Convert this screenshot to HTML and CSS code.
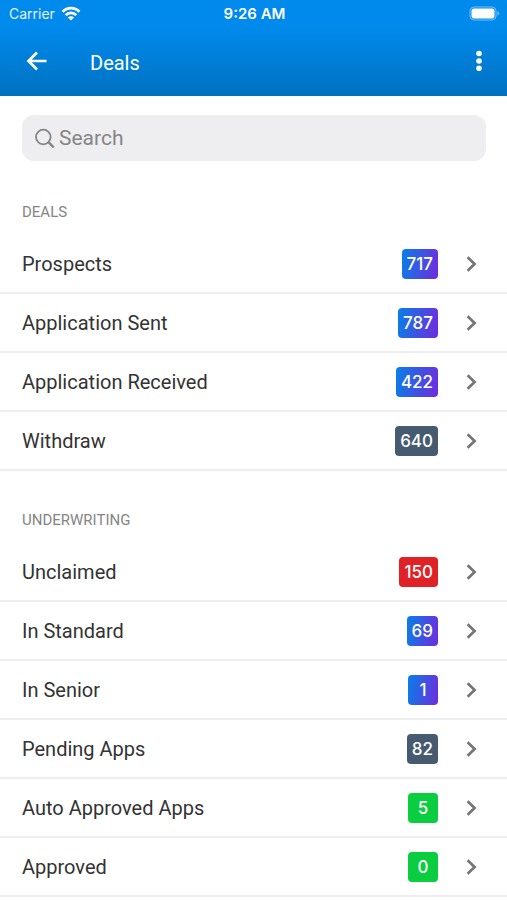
FILE: index.html
```html
<!DOCTYPE html>
<html lang="en">
<head>
<meta charset="utf-8">
<meta name="viewport" content="width=device-width, initial-scale=1">
<title>Deals</title>
<link rel="stylesheet" href="styles.css">
</head>
<body>
<svg class="sprite" aria-hidden="true">
  <symbol id="chevron" viewBox="0 0 12 18"><path d="M1.6 2.2 8.6 9 1.6 15.8" fill="none" stroke="currentColor" stroke-width="2.7"/></symbol>
</svg>
<header class="header">
  <div class="status">
    <div class="carrier">Carrier
      <svg width="20" height="16" viewBox="0 0 20 16" aria-hidden="true">
        <g fill="none" stroke="currentColor" stroke-width="2.8">
          <path d="M1.6 5.7C6.3.9 13.7.9 18.4 5.7"/>
          <path d="M4.7 9.1C7.7 6 12.3 6 15.3 9.1"/>
        </g>
        <path d="M6.9 11.4C8.7 9.8 11.3 9.8 13.1 11.4L10 14.6Z" fill="currentColor"/>
      </svg>
    </div>
    <div class="time">9:26 AM</div>
    <svg class="battery" width="31" height="16" viewBox="0 0 31 16" aria-hidden="true">
      <rect x="1" y="1" width="26" height="13" rx="4" fill="none" stroke="#fff" stroke-opacity=".45"/>
      <rect x="2.5" y="2.5" width="23" height="10" rx="2.5" fill="#fff"/>
      <path d="M28.5 5.3C30.5 6 30.5 9 28.5 9.7Z" fill="#fff" fill-opacity=".5"/>
    </svg>
  </div>
  <div class="toolbar">
    <button class="icon-button" type="button" aria-label="Back">
      <svg width="22" height="20" viewBox="0 0 22 20"><path d="M20.5 10H2.5M11 1.5 2.5 10 11 18.5" fill="none" stroke="currentColor" stroke-width="2.7"/></svg>
    </button>
    <h1 class="title">Deals</h1>
    <button class="icon-button" type="button" aria-label="More options">
      <svg width="6" height="22" viewBox="0 0 6 22" fill="currentColor"><circle cx="3" cy="3.5" r="2.8"/><circle cx="3" cy="11" r="2.8"/><circle cx="3" cy="18.3" r="2.8"/></svg>
    </button>
  </div>
</header>
<main>
  <label class="search">
    <svg width="20" height="20" viewBox="0 0 20 20" aria-hidden="true"><g fill="none" stroke="currentColor"><circle cx="8.3" cy="9" r="7.3" stroke-width="1.8"/><path d="m13.5 14.2 5.3 5.3" stroke-width="2.4"/></g></svg>
    <input type="search" placeholder="Search" aria-label="Search">
  </label>
  <section class="group">
    <h2 class="heading">DEALS</h2>
    <ul class="list">
      <li><a class="row" href="#prospects"><span class="label">Prospects</span><span class="badge">717</span><svg class="chevron"><use href="#chevron"/></svg></a></li>
      <li><a class="row" href="#sent"><span class="label">Application Sent</span><span class="badge">787</span><svg class="chevron"><use href="#chevron"/></svg></a></li>
      <li><a class="row" href="#received"><span class="label">Application Received</span><span class="badge">422</span><svg class="chevron"><use href="#chevron"/></svg></a></li>
      <li><a class="row" href="#withdraw"><span class="label">Withdraw</span><span class="badge slate">640</span><svg class="chevron"><use href="#chevron"/></svg></a></li>
    </ul>
  </section>
  <section class="group">
    <h2 class="heading">UNDERWRITING</h2>
    <ul class="list">
      <li><a class="row" href="#unclaimed"><span class="label">Unclaimed</span><span class="badge red">150</span><svg class="chevron"><use href="#chevron"/></svg></a></li>
      <li><a class="row" href="#standard"><span class="label">In Standard</span><span class="badge">69</span><svg class="chevron"><use href="#chevron"/></svg></a></li>
      <li><a class="row" href="#senior"><span class="label">In Senior</span><span class="badge">1</span><svg class="chevron"><use href="#chevron"/></svg></a></li>
      <li><a class="row" href="#pending"><span class="label">Pending Apps</span><span class="badge slate">82</span><svg class="chevron"><use href="#chevron"/></svg></a></li>
      <li><a class="row" href="#auto"><span class="label">Auto Approved Apps</span><span class="badge green">5</span><svg class="chevron"><use href="#chevron"/></svg></a></li>
      <li><a class="row" href="#approved"><span class="label">Approved</span><span class="badge green">0</span><svg class="chevron"><use href="#chevron"/></svg></a></li>
    </ul>
  </section>
</main>
</body>
</html>
```
FILE: styles.css
```css
* { box-sizing: border-box; }
body {
  margin: 0;
  background: #fff;
  color: #333;
  font-family: Roboto, "Liberation Sans", sans-serif;
}
.sprite { display: none; }
svg { display: block; flex: none; }
.header {
  color: #fff;
  background: linear-gradient(#008aeb 0, #008aeb 28px, #0071c1 100%);
}
.status {
  display: grid;
  grid-template-columns: 1fr auto 1fr;
  align-items: center;
  height: 28px;
  padding: 0 7px 0 9px;
  font: 400 14px/20px Inter, sans-serif;
}
.carrier { display: flex; align-items: center; gap: 6px; color: #e3f3ff; }
.carrier svg { color: #fff; }
.time { font-size: 15px; font-weight: 600; }
.battery { justify-self: end; }
.toolbar {
  display: flex;
  align-items: center;
  height: 68px;
  padding: 2px 13px 0 22px;
}
.icon-button {
  display: flex;
  align-items: center;
  justify-content: center;
  width: 30px;
  height: 40px;
  margin-bottom: 4px;
  padding: 0;
  border: 0;
  background: none;
  color: inherit;
}
.title {
  flex: 1;
  margin: 0 0 0 38px;
  font-size: 20px;
  line-height: 24px;
  font-weight: 400;
}
.search {
  display: flex;
  align-items: center;
  gap: 4px;
  height: 46px;
  margin: 19px 21px 0 22px;
  padding: 0 13px;
  border-radius: 12px;
  background: #eeeef0;
  color: #858587;
}
.search input {
  flex: 1;
  min-width: 0;
  padding: 0;
  border: 0;
  outline: 0;
  background: none;
  color: inherit;
  font: 400 21px/28px Roboto, sans-serif;
}
.search input::placeholder { color: inherit; opacity: 1; }
.heading {
  margin: 0;
  padding: 41px 22px 13px;
  color: #858585;
  font-size: 15px;
  line-height: 20px;
  font-weight: 400;
}
.group + .group .heading { padding-top: 39px; }
.list { margin: 0; padding: 0; list-style: none; }
.row {
  display: flex;
  align-items: center;
  height: 59px;
  padding: 1px 29px 0 22px;
  border-bottom: 2px solid #eee;
  color: inherit;
  text-decoration: none;
}
.label { flex: 1; font-size: 20px; line-height: 24px; }
.badge {
  min-width: 30px;
  padding: 0 5px;
  border-radius: 4px;
  background: linear-gradient(100deg, #087fe8, #702bdd);
  color: #fff;
  font: 500 17px/30px Inter, sans-serif;
  text-align: center;
}
.slate { background: #475b70; }
.red { background: #e02226; }
.green { background: #0bcd40; }
.chevron { width: 12px; height: 18px; margin-left: 28px; color: #757575; }
```
